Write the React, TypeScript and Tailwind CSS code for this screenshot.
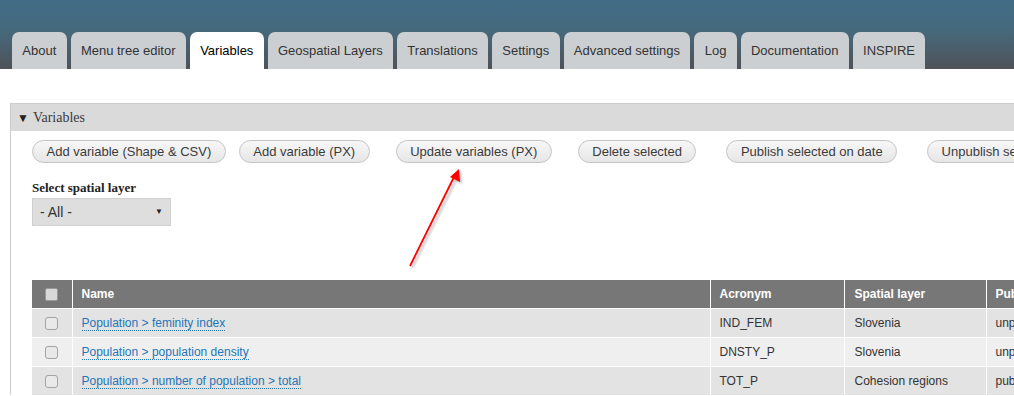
const tabs = [
  'About',
  'Menu tree editor',
  'Variables',
  'Geospatial Layers',
  'Translations',
  'Settings',
  'Advanced settings',
  'Log',
  'Documentation',
  'INSPIRE',
]

const buttons = [
  { label: 'Add variable (Shape & CSV)', cls: 'ml-0' },
  { label: 'Add variable (PX)', cls: 'ml-[13px]' },
  { label: 'Update variables (PX)', cls: 'ml-[26px]' },
  { label: 'Delete selected', cls: 'ml-[26px]' },
  { label: 'Publish selected on date', cls: 'ml-[30px]' },
  { label: 'Unpublish selected', cls: 'ml-[30px]' },
]

const rows = [
  { name: 'Population > feminity index', acronym: 'IND_FEM', layer: 'Slovenia', pub: 'unpublished' },
  { name: 'Population > population density', acronym: 'DNSTY_P', layer: 'Slovenia', pub: 'unpublished' },
  { name: 'Population > number of population > total', acronym: 'TOT_P', layer: 'Cohesion regions', pub: 'published' },
]

function Checkbox({ head }: { head?: boolean }) {
  return (
    <span
      className={
        head
          ? 'inline-block h-[13px] w-[13px] rounded-[2px] border border-[#9a9a9a] bg-[#d9d9d9] align-middle'
          : 'inline-block h-[13px] w-[13px] rounded-[3px] border border-[#a3a3a3] bg-[#e9e9e9] align-middle'
      }
    />
  )
}

function Arrow() {
  return (
    <svg className="pointer-events-none absolute left-[400px] top-[160px]" width="70" height="120" viewBox="0 0 70 120">
      <defs>
        <filter id="sh" x="-50%" y="-50%" width="200%" height="200%">
          <feGaussianBlur stdDeviation="1.2" />
        </filter>
      </defs>
      <g filter="url(#sh)" opacity="0.45" transform="translate(2 2)">
        <line x1="10" y1="106" x2="56" y2="14" stroke="#777" strokeWidth="2" />
        <polygon points="59,9 60,22 50,17" fill="#777" />
      </g>
      <line x1="10" y1="106" x2="55" y2="15" stroke="#ff0000" strokeWidth="1.8" />
      <polygon points="59,9 60,22 50,17" fill="#ff0000" />
    </svg>
  )
}

export default function App() {
  return (
    <div className="relative h-[396px] w-[1014px] overflow-hidden bg-white font-['Liberation_Sans',Arial,sans-serif]">
      <div className="flex h-[69px] items-end bg-[linear-gradient(to_bottom,#416c86_0%,#456a7e_40%,#4f5259_100%)] pl-[12px]">
        <div className="flex gap-[4px]">
          {tabs.map(t => (
            <div
              key={t}
              className={
                t === 'Variables'
                  ? 'flex h-[37px] items-center rounded-t-[7px] bg-white px-[10.3px] text-[13px] text-black'
                  : 'flex h-[37px] items-center rounded-t-[7px] bg-[#cbcfd2] px-[10.3px] text-[13px] text-[#333]'
              }
            >
              {t}
            </div>
          ))}
        </div>
      </div>

      <div className="ml-[10px] mt-[34px] w-[1200px] border-l border-t border-[#cccccc]">
        <div className="flex h-[27px] items-center bg-[#dadada] pl-[6px] font-['Liberation_Serif',serif] text-[14px] text-[#3a3a3a]">
          <span className="mr-[4px] text-[12px] text-[#222]">▼</span>
          Variables
        </div>

        <div className="pl-[21px] pt-[9px]">
          <div className="flex whitespace-nowrap">
            {buttons.map(b => (
              <div
                key={b.label}
                className={`${b.cls} flex h-[23px] items-center rounded-full border border-[#c4c4c4] bg-[linear-gradient(to_bottom,#f7f7f7,#e6e6e6)] px-[13.5px] text-[13px] text-[#3b3b3b]`}
              >
                {b.label}
              </div>
            ))}
          </div>

          <div className="mt-[17px] font-['Liberation_Serif',serif] text-[13px] leading-[16px] font-bold text-[#222]">Select spatial layer</div>
          <div className="mt-[2px] flex h-[28px] w-[139px] items-center justify-between border border-[#d0d0d0] bg-[#dedede] pl-[7px] pr-[7px] text-[14px] text-[#333]">
            <span>- All -</span>
            <span className="text-[8px] text-[#222]">▼</span>
          </div>

          <table className="mt-[54px] border-collapse text-[12px]">
            <thead>
              <tr className="h-[28px] bg-[#777777] text-left text-white">
                <th className="w-[40px] border-r border-white text-center"><Checkbox head /></th>
                <th className="w-[638px] border-r border-white pl-[9px] font-bold">Name</th>
                <th className="w-[134px] border-r border-white pl-[9px] font-bold">Acronym</th>
                <th className="w-[142px] border-r border-white pl-[10px] font-bold">Spatial layer</th>
                <th className="w-[160px] pl-[9px] font-bold">Published</th>
              </tr>
            </thead>
            <tbody>
              {rows.map((r, i) => (
                <tr key={r.acronym} className={i % 2 === 1 ? 'h-[29px] bg-[#efefef] text-[#333]' : 'h-[29px] bg-[#e3e3e3] text-[#333]'}>
                  <td className="border-r border-t border-white text-center"><Checkbox /></td>
                  <td className="border-r border-t border-white pl-[9px]">
                    <span className="border-b border-dotted border-[#2476b8] text-[#2476b8]">{r.name}</span>
                  </td>
                  <td className="border-r border-t border-white pl-[9px]">{r.acronym}</td>
                  <td className="border-r border-t border-white pl-[10px]">{r.layer}</td>
                  <td className="border-t border-white pl-[9px]">{r.pub}</td>
                </tr>
              ))}
            </tbody>
          </table>
        </div>
      </div>

      <Arrow />
    </div>
  )
}
